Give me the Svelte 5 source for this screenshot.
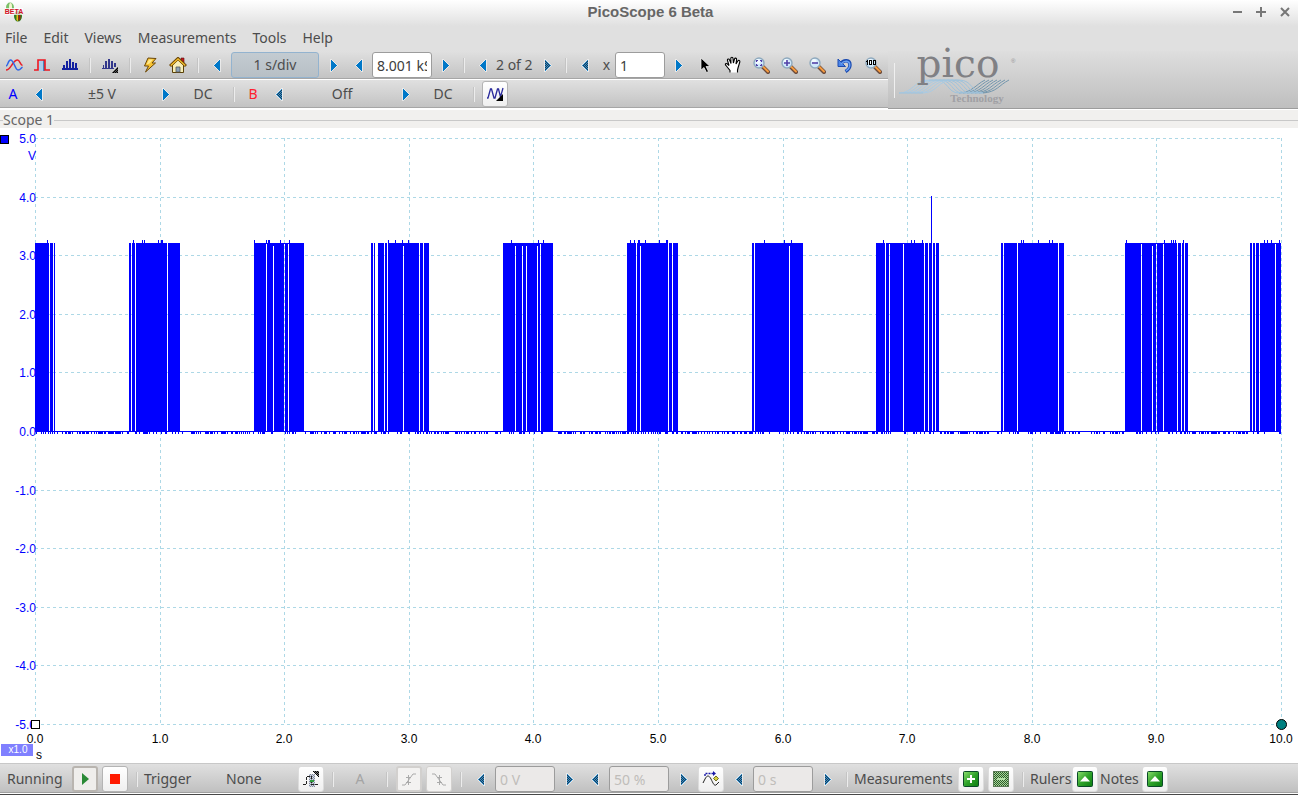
<script>
  const menus = ['File', 'Edit', 'Views', 'Measurements', 'Tools', 'Help'];

  const gridX = [35, 160, 284, 409, 533, 658, 783, 907, 1032, 1156, 1281];
  const gridY = [10, 69, 127, 186, 244, 303, 362, 420, 479, 537, 596];
  const volts = ['5.0', '4.0', '3.0', '2.0', '1.0', '0.0', '-1.0', '-2.0', '-3.0', '-4.0', '-5.0'];
  const seconds = ['0.0', '1.0', '2.0', '3.0', '4.0', '5.0', '6.0', '7.0', '8.0', '9.0', '10.0'];

  // Runs of samples, each written as start-end along the time axis.
  const high =
    '35-49 50-53 54-55 129-131 132-135 136-167 168-180 254-266 267-273 274-284 285-288 289-304 ' +
    '371-373 374-375 378-384 385-387 388-403 404-419 420-423 424-429 503-515 516-522 523-526 527-537 538-540 541-553 ' +
    '627-636 637-640 641-668 669-672 673-678 752-754 755-789 790-803 ' +
    '876-885 886-889 890-903 904-924 925-928 929-932 933-935 936-939 1001-1003 1004-1017 1018-1058 1059-1064 ' +
    '1125-1141 1142-1152 1153-1156 1157-1163 1164-1177 1178-1181 1182-1184 1185-1188 1250-1252 1253-1255 1256-1259 1260-1275 1276-1281';
  const caps = '266-289 403-404 515-541 640-641 789-790 889-890 903-904 1141-1142 1152-1164 1275-1276';
  const thickCaps = '273-274 403-404 515-516 522-523 526-527 537-538 640-641 789-790 1152-1153';
  const overshoot =
    '47 133 142 144 158 161-163 254 266 268-270 280 289 388 395 402 408 511 538 543 630 634 638-640 645 659 666-668 ' +
    '764 784 791 883 911 914 922 1021 1023 1038 1049 1052 1126 1164 1171 1173 1175 1183 1264 1267 1271 1279';
  const noise =
    '36 41 43 45 48 50 52 54 57 62 65-67 68-71 72 77 79-81 82-85 86-89 91 94 96 98-103 104-106 108-114 115-121 122 127-129 ' +
    '135-137 139 143-148 149 153 156 161 165-167 172 175 178 182 191-195 196 198 200 205-209 210-213 214 217 221-226 227 231-233 235-238 ' +
    '239 241 243 245 247 249 253 258 260 262-265 271-273 285 287 289 292-294 295 305 310-314 315 317 ' +
    '321 324-327 329 333-336 339 342 344-347 350 353-355 356 358 361-366 367-369 371 374-377 381 383-386 388 397 400-402 408-410 415 417-419 ' +
    '420 423 426-428 429 431 434-436 437-439 441 443 445-449 455-458 459 461 464 466-469 471 474-476 479 481 484 486-488 495-498 500 509 511 513 ' +
    '519-522 523-525 529 534 541-543 558-562 564-566 567-572 573 575 580-582 583-585 589 591-593 595-598 599-601 605 607 609-611 612-615 616 618 620 ' +
    '622-626 627-629 631 633 635 637-639 641 643 645 648 651 653 655 657 659-661 665-668 672-674 676-678 681-683 685 687-690 ' +
    '692-697 698 701 704 707 709 712 715 717-719 722 724 727-729 732-735 737 740-742 744-747 749-753 755 758 760 762-764 769 779 785 787 790 793 797-799 ' +
    '801 804 806-809 810 812-814 815 820 822-824 827-829 830 832-835 837 840 843 846-850 852 854-857 858 860-862 863-868 872-875 876-878 881-883 884 ' +
    '886 888 890 904-906 913-915 916 920 924 929-931 933 940-942 944-946 947-949 950-954 958 960-968 969 973 976-978 979-983 984-986 987-989 997-999 ' +
    '1001 1009 1013 1015 1017-1019 1028 1030-1033 1035 1040 1046 1050-1054 1055-1061 1062 1064-1066 1069 1072-1074 1075 1078-1080 1091 1094 1096-1098 ' +
    '1099 1103-1105 1110 1112-1114 1115-1118 1119 1122-1124 1136-1138 1139-1141 1142 1146 1151 1155 1158 1168-1170 1172 1176 1180-1182 1184-1186 1187 ' +
    '1189 1192-1196 1199 1201-1204 1205 1207-1209 1211-1217 1218-1220 1223-1226 1228-1230 1233 1236 1238-1241 1242-1245 1246-1248 1253 1257-1259 1264 1279-1281';

  function bars(runs, y, height) {
    return runs
      .split(' ')
      .map((run) => {
        const [from, to] = run.split('-').map(Number);
        return `M${from} ${y}H${to ?? from + 1}V${y + height}H${from}Z`;
      })
      .join('');
  }

  const trace = [
    bars(high, 115, 189),
    bars(caps, 115, 1),
    bars(thickCaps, 115, 3),
    bars(overshoot, 112, 3),
    bars('931', 68, 47),
    bars(noise, 304, 2),
    bars('35-1281', 303, 1)
  ].join('');

  const logoLines = [0, 1, 2, 3, 4, 5, 6];
</script>

{#snippet arrow(dir, label, off)}
  <button class="arrow" aria-label={label}>
    <svg width="9" height="13" viewBox="0 0 9 13" shape-rendering="crispEdges">
      {#if dir === 'left'}
        <path d="M8 0V13L7 13L0 7V6L7 0Z" fill="#f4f4f4" opacity=".7" />
        <path d="M7 1V12L1 7V6Z" fill={off ? 'url(#dither-blue)' : '#0078c8'} />
      {:else}
        <path d="M1 0V13L2 13L9 7V6L2 0Z" fill="#f4f4f4" opacity=".7" />
        <path d="M2 1V12L8 7V6Z" fill={off ? 'url(#dither-blue)' : '#0078c8'} />
      {/if}
    </svg>
  </button>
{/snippet}

{#snippet lens()}
  <path d="M10 10L15 15" stroke="#6b4a3a" stroke-width="4" stroke-linecap="round" />
  <path d="M10 9.5L15 14.5" stroke="#f59a3e" stroke-width="2" stroke-linecap="round" />
  <circle cx="6" cy="6" r="5" fill="#cfe8fb" stroke="#8fa9bd" stroke-width="1.4" />
  <circle cx="5" cy="4.5" r="2.5" fill="#f2faff" />
{/snippet}

<svg class="defs" width="0" height="0" aria-hidden="true">
  <defs>
    <pattern id="dither-blue" width="2" height="2" patternUnits="userSpaceOnUse">
      <rect width="2" height="2" fill="#2f8fd0" />
      <path d="M0 0H1V1H0ZM1 1H2V2H1Z" fill="#1f3d52" />
    </pattern>
    <pattern id="dither-green" width="2" height="2" patternUnits="userSpaceOnUse">
      <rect width="2" height="2" fill="#a6d79a" />
      <path d="M0 0H1V1H0ZM1 1H2V2H1Z" fill="#2e5a2a" />
    </pattern>
    <pattern id="dither-black" width="2" height="2" patternUnits="userSpaceOnUse">
      <path d="M0 0H1V1H0ZM1 1H2V2H1Z" fill="#000" />
    </pattern>
    <linearGradient id="green" x1="0" y1="0" x2="1" y2="1">
      <stop offset="0" stop-color="#8fe070" />
      <stop offset=".5" stop-color="#2fa32a" />
      <stop offset="1" stop-color="#0b7d10" />
    </linearGradient>
  </defs>
</svg>

<div class="app">
  <header>
    <div class="titlebar">
      <svg width="20" height="20" viewBox="0 0 20 20" aria-hidden="true">
        <ellipse cx="6" cy="5.500" rx="4" ry="5" fill="#7cc06a" />
        <ellipse cx="6.500" cy="5" rx="1.500" ry="4" fill="#f3f6d0" />
        <ellipse cx="14" cy="14" rx="4" ry="5.500" fill="#2d7d1e" />
        <path d="M12.500 13V18L14 19.500V13Z" fill="#e8c21a" />
        <path d="M14.500 13V19L16.500 17V13Z" fill="#a3200f" />
        <rect x="1" y="6" width="18" height="7" fill="#fff" opacity=".75" />
        <text x="10" y="12" text-anchor="middle" font-family="Liberation Sans, sans-serif" font-size="7" font-weight="700" fill="#d2122a">BETA</text>
      </svg>
      <h1>PicoScope 6 Beta</h1>
      <div class="window-buttons">
        <button aria-label="Minimize"><svg width="11" height="11" viewBox="0 0 11 11"><path d="M1 5H10" /></svg></button>
        <button aria-label="Maximize"><svg width="11" height="11" viewBox="0 0 11 11"><path d="M0 5H10M5 0V10" /></svg></button>
        <button aria-label="Close"><svg width="11" height="11" viewBox="0 0 11 11"><path d="M1 1L9 9M9 1L1 9" /></svg></button>
      </div>
    </div>

    <nav>
      {#each menus as item}<button>{item}</button>{/each}
    </nav>

    <div class="bars">
      <div class="toolbars">
        <div class="toolbar">
          <button class="tool" aria-label="Scope mode">
            <svg width="17" height="16" viewBox="0 0 17 16" fill="none" stroke-width="1.500">
              <path d="M0 13C3 13 4.500 10 6.500 7C8.500 4 10 3 11.500 3C14 3 14 8 16.500 8.500" stroke="#e8202a" />
              <path d="M0 9C2 9 2 3 4.500 3C8 3 9 13 12 13C14.500 13 15 11 16.500 10" stroke="#2f66e8" />
            </svg>
          </button>
          <button class="tool" aria-label="Persistence mode">
            <svg width="16" height="16" viewBox="0 0 16 16">
              <rect x="5" y="3" width="4" height="11" fill="#a9cdec" />
              <rect x="9" y="3" width="2" height="11" fill="#4a86b8" />
              <path d="M0 13H4V3H11V13H16" fill="none" stroke="#ee1620" stroke-width="1.600" />
            </svg>
          </button>
          <button class="tool" aria-label="Spectrum mode">
            <svg width="16" height="16" viewBox="0 0 16 16" shape-rendering="crispEdges">
              <path d="M0 11H16V13H0ZM1 8H3V12H1ZM4 4H6V12H4ZM7 2H9V12H7ZM10 5H12V12H10ZM13 6H15V12H13Z" fill="#1220a0" />
            </svg>
          </button>
          <span class="sep"></span>
          <button class="tool" aria-label="Spectrum options">
            <svg width="16" height="16" viewBox="0 0 16 16" shape-rendering="crispEdges">
              <path d="M0 11H12V12H0ZM1 8H2V12H1ZM3 4H5V12H3ZM6 2H8V12H6ZM9 4H11V11H9ZM12 6H14V10H12Z" fill="#33388c" />
              <path d="M16 9V16H9Z" fill="#555" /><path d="M16 9V16H9Z" fill="url(#dither-black)" />
            </svg>
          </button>
          <span class="sep"></span>
          <button class="tool" aria-label="Auto setup">
            <svg width="16" height="16" viewBox="0 0 16 16">
              <path d="M6 1L14 1.500L10 6H13.500L3.500 15L6.500 9H2.500Z" fill="#f7c232" stroke="#6b4708" />
              <path d="M7 2.500L11 2.500L7.500 6.500L4.500 7.500Z" fill="#ffe98c" />
            </svg>
          </button>
          <button class="tool" aria-label="Home">
            <svg width="18" height="16" viewBox="0 0 18 16">
              <path d="M12 1H15V6H12Z" fill="#c4161c" stroke="#5d1010" stroke-width=".6" />
              <path d="M3.500 8V15.500H14.500V8L9 3Z" fill="#f6eeb8" stroke="#5a4108" />
              <path d="M1 9L9 1.500L17 9" fill="none" stroke="#6b4708" stroke-width="3" />
              <path d="M1.800 8.500L9 2L16.200 8.500" fill="none" stroke="#f3bd2c" stroke-width="1.400" />
              <path d="M7 15V10H11V15Z" fill="#8ba2b8" stroke="#555" stroke-width=".8" />
            </svg>
          </button>
          <span class="sep"></span>
          {@render arrow('left', 'Shorter timebase', false)}
          <button class="timebase">1 s/div</button>
          {@render arrow('right', 'Longer timebase', false)}
          {@render arrow('left', 'Fewer samples', false)}
          <input class="field" aria-label="Samples" value="8.001 kS" />
          {@render arrow('right', 'More samples', false)}
          <span class="sep"></span>
          {@render arrow('left', 'Previous waveform', false)}
          <span class="count">2 of 2</span>
          {@render arrow('right', 'Next waveform', true)}
          <span class="sep"></span>
          {@render arrow('left', 'Zoom factor down', true)}
          <label class="times" for="zoom-factor">x</label>
          <input class="field short" id="zoom-factor" value="1" />
          {@render arrow('right', 'Zoom factor up', false)}
          <button class="tool" aria-label="Select">
            <svg width="12" height="17" viewBox="0 0 12 17">
              <path d="M2 1V13L5 10.500L7.500 15.500L9.500 14.500L7 9.500H11Z" fill="#000" stroke="#f6f6f6" stroke-width=".7" />
            </svg>
          </button>
          <button class="tool" aria-label="Hand">
            <svg width="18" height="18" viewBox="0 0 18 18">
              <path d="M6 16.500V14.500L2 9.500C0.500 8 2 6.800 3.500 8L5 9.500L3.500 4.500C3 2.800 5 2.300 5.600 4L7 7.500L6.800 2.500C6.800 .8 9 .8 9 2.500L9.400 7L10.500 3C11 1.500 12.800 2 12.600 3.500L12 8L13.800 5C14.600 3.700 16.300 4.500 15.800 6L14 12L13.500 14V16.500" fill="#fff" stroke="#000" stroke-width="1.100" />
            </svg>
          </button>
          <button class="tool" aria-label="Marquee zoom">
            <svg width="17" height="17" viewBox="0 0 17 17">{@render lens()}<path d="M3.500 5V3.500H5M7 3.500H8.500V5M8.500 7V8.500H7M5 8.500H3.500V7" fill="none" stroke="#5040a8" stroke-width="1.200" /></svg>
          </button>
          <button class="tool" aria-label="Zoom in">
            <svg width="17" height="17" viewBox="0 0 17 17">{@render lens()}<path d="M3 6H9M6 3V9" stroke="#5040a8" stroke-width="1.600" /></svg>
          </button>
          <button class="tool" aria-label="Zoom out">
            <svg width="17" height="17" viewBox="0 0 17 17">{@render lens()}<path d="M3 6H9" stroke="#5040a8" stroke-width="1.600" /></svg>
          </button>
          <button class="tool" aria-label="Undo zoom">
            <svg width="16" height="16" viewBox="0 0 16 16">
              <path d="M3.500 7C7 2 13 3 13 8C13 11 11 13 8.500 14.500" fill="none" stroke="#1c4bb0" stroke-width="3.400" />
              <path d="M1 2V9.500H8.500Z" fill="#4c86e8" stroke="#1c4bb0" />
              <path d="M4 7C7.500 3 12.700 3.500 12.800 8C12.800 10.500 11 12.500 9 13.800" fill="none" stroke="#6aa2f4" stroke-width="1.400" />
            </svg>
          </button>
          <button class="tool" aria-label="Zoom to 100%">
            <svg width="17" height="17" viewBox="0 0 17 17">{@render lens()}<g shape-rendering="crispEdges" fill="#000"><path d="M2 3H3V8H2ZM1 4H2V5H1Z" /><path fill-rule="evenodd" d="M4 3H7V8H4ZM5 4V7H6V4ZM8 3H11V8H8ZM9 4V7H10V4Z" /></g></svg>
          </button>
        </div>

        <div class="toolbar">
          <button class="channel a">A</button>
          {@render arrow('left', 'Channel A range down', false)}
          <button class="range">±5 V</button>
          {@render arrow('right', 'Channel A range up', false)}
          <button class="coupling">DC</button>
          <span class="sep"></span>
          <button class="channel b">B</button>
          {@render arrow('left', 'Channel B range down', true)}
          <button class="range">Off</button>
          {@render arrow('right', 'Channel B range up', false)}
          <button class="coupling">DC</button>
          <span class="sep"></span>
          <button class="push" aria-label="Signal generator">
            <svg width="18" height="16" viewBox="0 0 18 16">
              <path d="M1 12H2L4.500 3H5.500L8 12H9L11.500 3H12.500L14.500 11L17 2" fill="none" stroke="#2a2a9c" stroke-width="1.300" />
              <path d="M17 8V15H10Z" fill="#000" />
            </svg>
          </button>
        </div>
      </div>

      <div class="brand">
        <svg width="124" height="54" viewBox="0 0 124 54">
          <g fill="none" stroke-width="1">
            {#each logoLines as n}
              <path d="M{4 + n * 4} 40C{18 + n * 4} 40 {19 + n * 4} 27 {34 + n * 4} 27" stroke="#a9cbe4" />
              <path d="M{40 + n * 4} 27C{54 + n * 4} 27 {52 + n * 4} 40 {64 + n * 4} 40" stroke="#9fc3dc" />
              <path d="M{64 + n * 4} 40C{78 + n * 4} 39 {80 + n * 4} 32 {90 + n * 4} 27" stroke="#7296ad" />
            {/each}
            <path d="M4 40H28M34 27H64M64 40H88" stroke="#a0c2da" />
          </g>
          <text x="63" y="24" text-anchor="middle" font-family="DejaVu Serif, serif" font-size="39" fill="#808084">pico</text>
          <text x="116" y="10" font-family="Liberation Sans, sans-serif" font-size="6" fill="#909094">®</text>
          <text x="82" y="49" text-anchor="middle" font-family="Liberation Serif, serif" font-size="11" font-weight="700" fill="#a0a0a4">Technology</text>
        </svg>
      </div>
    </div>
  </header>

  <main>
    <div class="view-title"><h2>Scope 1</h2></div>
    <svg class="plot" viewBox="0 0 1298 635" role="img" aria-label="Channel A voltage against time">
      <g class="grid" shape-rendering="crispEdges">
        {#each gridY as y}<path d="M35 {y + 0.5}H1282" />{/each}
        {#each gridX as x}<path d="M{x + 0.5} 10V597" />{/each}
      </g>
      <g class="volts">
        {#each gridY as y, i}<text x="36" y={y + 5}>{volts[i]}</text>{/each}
        <text x="36" y="32">V</text>
      </g>
      <g class="seconds">
        {#each gridX as x, i}<text {x} y="615">{seconds[i]}</text>{/each}
        <text x="39" y="631">s</text>
      </g>
      <path d={trace} fill="#0000ff" shape-rendering="crispEdges" />
      <rect x="0.5" y="7.500" width="8" height="8" fill="#0000ff" stroke="#000" />
      <rect x="31.500" y="592.500" width="8" height="8" fill="#fff" stroke="#000" />
      <circle cx="1281.500" cy="596.500" r="5" fill="#008080" stroke="#000" />
      <rect x="1" y="616" width="32" height="12" fill="#8080ff" />
      <text class="scale" x="18" y="625">x1.0</text>
    </svg>
  </main>

  <footer>
    <div class="status">
      <span class="running">Running</span>
      <button class="push down" aria-label="Start">
        <svg width="14" height="14" viewBox="0 0 14 14"><path d="M4 1V13L11 7Z" fill="#2a8a36" /></svg>
      </button>
      <button class="push" aria-label="Stop">
        <svg width="14" height="14" viewBox="0 0 14 14"><path d="M2 2H12V12H2Z" fill="#ff1a00" /></svg>
      </button>
      <span class="sep"></span>
      <span class="trigger">Trigger</span>
      <button class="mode">None</button>
      <button class="push flat" aria-label="Advanced triggers">
        <svg width="18" height="18" viewBox="0 0 18 18" shape-rendering="crispEdges">
          <rect x="7" y="4" width="6" height="13" fill="#cfd8ea" />
          <rect x="7" y="4" width="6" height="13" fill="url(#dither-black)" opacity=".35" />
          <path d="M1 14.500H4.500V6.500H9.500V14.500H16" fill="none" stroke="#222" stroke-dasharray="3 1" />
          <path d="M8 10H12V12H8Z" fill="#2f9c3c" />
          <path d="M10 1H17V8Z" fill="#777" /><path d="M10 1H17V8Z" fill="url(#dither-black)" />
        </svg>
      </button>
      <span class="sep"></span>
      <button class="source" disabled>A</button>
      <span class="sep"></span>
      <button class="push down" aria-label="Rising edge" disabled>
        <svg width="16" height="16" viewBox="0 0 16 16" fill="none" stroke="#aaa"><path d="M1 14H4L12 3H15M7.500 4V14M5 6.500H10M5 11.500H10" /></svg>
      </button>
      <button class="push" aria-label="Falling edge" disabled>
        <svg width="16" height="16" viewBox="0 0 16 16" fill="none" stroke="#aaa"><path d="M1 3H4L12 14H15M8.500 4V14M6 6.500H11M6 11.500H11" /></svg>
      </button>
      <span class="sep"></span>
      {@render arrow('left', 'Threshold down', true)}
      <input class="field" aria-label="Threshold" value="0 V" disabled />
      {@render arrow('right', 'Threshold up', true)}
      {@render arrow('left', 'Pre-trigger down', true)}
      <input class="field" aria-label="Pre-trigger" value="50 %" disabled />
      {@render arrow('right', 'Pre-trigger up', true)}
      <button class="push flat" aria-label="Post-trigger delay">
        <svg width="18" height="16" viewBox="0 0 18 16" fill="none">
          <path d="M1 12L3 8C5 4 7 4 9 8C11 12 12 15 14 14L17 11" stroke="#222" />
          <path d="M3 5V2.500H11" stroke="#1a1aa8" stroke-dasharray="2 1" stroke-width="1.400" />
          <path d="M11 0L14 2.500L11 5Z" fill="#1a1aa8" />
          <path d="M14 5L16.500 7.500L14 10L11.500 7.500Z" fill="#d6cf3a" stroke="#55520c" stroke-width=".8" />
        </svg>
      </button>
      {@render arrow('left', 'Delay down', true)}
      <input class="field" aria-label="Delay" value="0 s" disabled />
      {@render arrow('right', 'Delay up', true)}
      <span class="sep"></span>
      <span class="measurements">Measurements</span>
      <button class="push flat" aria-label="Add measurement">
        <svg width="16" height="16" viewBox="0 0 16 16"><rect x=".5" y=".5" width="15" height="15" rx="1" fill="url(#green)" stroke="#0a4a28" /><path d="M8 4V12M4 8H12" stroke="#fff" stroke-width="2" /></svg>
      </button>
      <button class="push flat" aria-label="Remove measurement">
        <svg width="16" height="16" viewBox="0 0 16 16" shape-rendering="crispEdges"><rect x=".5" y=".5" width="15" height="15" fill="url(#dither-green)" stroke="#5c7a58" /><path d="M4 8H12" stroke="#b5e0a8" stroke-width="2" /></svg>
      </button>
      <span class="sep"></span>
      <span class="word">Rulers</span>
      <button class="push flat" aria-label="Show rulers">
        <svg width="16" height="16" viewBox="0 0 16 16"><rect x=".5" y=".5" width="15" height="15" rx="1" fill="url(#green)" stroke="#0a4a28" /><path d="M3 10.500L8 5L13 10.500Z" fill="#fff" /></svg>
      </button>
      <span class="word">Notes</span>
      <button class="push flat" aria-label="Show notes">
        <svg width="16" height="16" viewBox="0 0 16 16"><rect x=".5" y=".5" width="15" height="15" rx="1" fill="url(#green)" stroke="#0a4a28" /><path d="M3 10.500L8 5L13 10.500Z" fill="#fff" /></svg>
      </button>
    </div>
    <div class="edge"></div>
  </footer>
</div>

<style>
  :global(body) {
    margin: 0;
    background: #fff;
  }
  .defs {
    position: absolute;
  }
  .app {
    display: flex;
    flex-direction: column;
    height: 100vh;
    overflow: hidden;
    font: 14px/20px 'Noto Sans', 'Open Sans', sans-serif;
    color: #4c4c4c;
  }
  button,
  input {
    box-sizing: border-box;
    margin: 0;
    padding: 0;
    border: 0;
    background: none;
    font: inherit;
    color: inherit;
  }
  svg {
    display: block;
    flex: none;
  }

  header {
    background: linear-gradient(#fff 0, #e0e0e0 26px, #e0e0e0 50px, #bebebe 108px);
  }
  .titlebar {
    display: grid;
    grid-template-columns: 1fr auto 1fr;
    align-items: center;
    height: 24px;
    padding: 0 1px 0 4px;
  }
  h1 {
    margin: 0;
    font: 700 15px/20px 'Liberation Sans', Arial, sans-serif;
    color: #666;
  }
  .window-buttons {
    display: flex;
    justify-content: flex-end;
  }
  .window-buttons button {
    display: grid;
    place-items: center;
    width: 24px;
    height: 24px;
  }
  .window-buttons path {
    stroke: #777;
    stroke-width: 2;
  }
  nav {
    display: flex;
    align-items: center;
    gap: 16px;
    height: 27px;
    padding-left: 5px;
  }

  .bars {
    display: flex;
  }
  .toolbars {
    flex: none;
  }
  .toolbar {
    display: flex;
    align-items: center;
    box-sizing: border-box;
    height: 29px;
    padding-right: 1px;
    border-bottom: 1px solid #fff;
    box-shadow: inset 0 -1px #a6a6a6;
    background: linear-gradient(#e0e0e0, #c2c2c2);
  }
  .tool,
  .arrow,
  .push {
    display: grid;
    place-items: center;
    flex: none;
    height: 26px;
  }
  .tool {
    width: 28px;
  }
  .arrow {
    width: 26px;
  }
  .sep {
    flex: none;
    width: 2px;
    height: 15px;
    margin: 0 5px;
    background: linear-gradient(90deg, #c4c4c4 50%, #ececec 50%);
  }
  .timebase {
    width: 88px;
    height: 26px;
    margin: 0 1px;
    border: 1px solid #93b3cf;
    border-radius: 3px;
    background: linear-gradient(#c3cbd1, #b7bfc5);
  }
  .field {
    flex: none;
    width: 60px;
    height: 26px;
    padding: 0 4px;
    border: 1px solid #9c9c9c;
    border-radius: 3px;
    background: #fff;
    color: #3c3c3c;
  }
  .short {
    width: 50px;
  }
  .count {
    width: 38px;
    white-space: nowrap;
  }
  .times {
    width: 17px;
    text-align: center;
  }
  .channel {
    width: 26px;
  }
  .a {
    color: #0000ff;
  }
  .b {
    color: #ff2030;
  }
  .range {
    width: 100px;
  }
  .coupling {
    width: 50px;
  }
  .push {
    width: 26px;
    margin: 0 2px;
    border: 1px solid #b4b4b4;
    border-radius: 3px;
    background: linear-gradient(#fff, #efefef);
  }
  .flat {
    border-color: #dcdcdc;
  }
  .down {
    border: 2px solid #b9b5b0;
    background: #efeeec;
  }
  .push:disabled {
    border-color: #d2d0ce;
    background: #f3f2f1;
  }

  .brand {
    display: flex;
    flex: 1;
    align-items: center;
    box-sizing: border-box;
    padding-left: 6px;
    box-shadow: inset 0 -1px #9c9c9c;
    background: linear-gradient(#dedede, #bebebe);
  }
  .brand svg {
    overflow: visible;
  }
  .brand::before {
    content: '';
    width: 1px;
    height: 35px;
    background: #efefef;
  }

  main {
    display: flex;
    flex: 1;
    flex-direction: column;
    min-height: 0;
  }
  .view-title {
    display: flex;
    align-items: center;
    box-sizing: border-box;
    height: 19px;
    padding-top: 2px;
    border-top: 1px solid #fff;
    background: #f1f0ee;
  }
  .view-title::before,
  .view-title::after {
    content: '';
    width: 3px;
    height: 1px;
    background: #c8c8c8;
  }
  .view-title::after {
    flex: 1;
  }
  h2 {
    margin: 0;
    font: inherit;
    color: #666;
  }
  .plot {
    flex: 1;
    width: 100%;
    min-height: 0;
    background: #fff;
    font-family: 'Liberation Sans', Arial, sans-serif;
    font-size: 12px;
  }
  .grid path {
    fill: none;
    stroke: #add8e6;
    stroke-dasharray: 3 3;
  }
  .volts {
    fill: #0000ff;
    text-anchor: end;
  }
  .seconds {
    fill: #000;
    text-anchor: middle;
  }
  .scale {
    fill: #fff;
    font-size: 10px;
    text-anchor: middle;
  }

  .status {
    display: flex;
    align-items: center;
    box-sizing: border-box;
    height: 30px;
    padding: 2px 0 0 7px;
    border-top: 1px solid #c8c8c8;
    border-bottom: 1px solid #a0a0a0;
    background: linear-gradient(#e0e0e0, #c0c0c0);
  }
  .status .sep {
    margin: 0 6px;
  }
  .status .field {
    margin: 0 1px;
  }
  .field:disabled {
    background: #ebe9e8;
    color: #c0bdba;
  }
  .running {
    width: 63px;
  }
  .trigger {
    width: 82px;
  }
  .mode {
    width: 70px;
    text-align: left;
  }
  .source {
    width: 40px;
    color: #a4a4a4;
  }
  .measurements {
    width: 102px;
  }
  .word {
    width: 40px;
  }
  .edge {
    height: 1px;
    border-top: 1px solid #fff;
    border-bottom: 1px solid #fff;
    background: #484848;
  }
</style>
